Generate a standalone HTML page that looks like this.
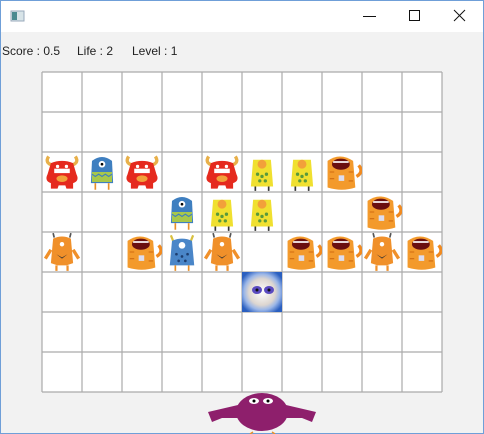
<!DOCTYPE html>
<html><head><meta charset="utf-8"><style>
html,body{margin:0;padding:0;}
body{width:484px;height:434px;position:relative;overflow:hidden;background:#f2f2f2;font-family:"Liberation Sans",sans-serif;}
.frame{position:absolute;left:0;top:0;width:482px;height:432px;border:1px solid #6f9fd8;}
.title{position:absolute;left:1px;top:1px;width:482px;height:31px;background:#fff;}
.hud{position:absolute;top:44px;font-size:12px;color:#222;}
svg{position:absolute;left:0;top:0;}
</style></head><body>
<div class="frame"></div>
<div class="title"></div>
<div class="hud" style="left:2px">Score : 0.5</div>
<div class="hud" style="left:77px">Life : 2</div>
<div class="hud" style="left:132px">Level : 1</div>
<svg width="484" height="434" viewBox="0 0 484 434">
<defs>
<symbol id="red" viewBox="3 2 34 36">
<path d="M8 6 Q4 12 12 14 M32 6 Q36 12 28 14" stroke="#e8b04a" stroke-width="3" fill="none"/>
<path d="M10 12 Q20 8 30 12 L33 22 Q36 28 30 30 L30 35 L24 35 L23 32 L17 32 L16 35 L10 35 L10 30 Q4 28 7 22 Z" fill="#e52a1e"/>
<rect x="13" y="17" width="14" height="4" fill="#fff"/><ellipse cx="20" cy="26" rx="5" ry="3" fill="#f2a13a"/>
<circle cx="16" cy="15" r="1.5" fill="#fff"/><circle cx="24" cy="15" r="1.5" fill="#fff"/>
</symbol>
<symbol id="blue" viewBox="3 2 34 36">
<path d="M11 10 Q20 3 29 10 L30 30 L10 30 Z" fill="#3f7fc0"/>
<rect x="11" y="20" width="18" height="9" fill="#a8c84a"/>
<path d="M11 22 l3 2 3-2 3 2 3-2 3 2 3-2" stroke="#3f7fc0" fill="none"/>
<circle cx="20" cy="13" r="3" fill="#fff"/><circle cx="20" cy="13" r="1.2" fill="#000"/>
<path d="M14 30 v6 M26 30 v6" stroke="#e8902a" stroke-width="1.5"/>
</symbol>
<symbol id="yellow" viewBox="3 2 34 36">
<path d="M12 9 L28 9 L30 33 L10 33 Z" fill="#f0e030"/>
<circle cx="20" cy="13" r="4" fill="#f2a13a"/>
<g fill="#5a9a3a"><circle cx="16" cy="22" r="1.5"/><circle cx="20" cy="24" r="1.5"/><circle cx="24" cy="22" r="1.5"/><circle cx="18" cy="28" r="1.5"/><circle cx="23" cy="28" r="1.5"/></g>
<path d="M14 33 v4 M26 33 v4" stroke="#333" stroke-width="1.5"/>
</symbol>
<symbol id="cat" viewBox="3 2 34 36">
<path d="M33 24 Q40 20 35 14" stroke="#f08a20" stroke-width="3" fill="none"/>
<path d="M7 10 Q18 2 30 10 L32 34 Q20 38 7 34 Z" fill="#f39a2c"/>
<ellipse cx="19" cy="13" rx="8" ry="5" fill="#6a1010"/><path d="M12 11 h14" stroke="#fff" stroke-width="1.5"/>
<rect x="17" y="23" width="5" height="5" fill="#dde"/>
<path d="M9 20 h4 M9 26 h4 M26 20 h4 M26 28 h4" stroke="#d06a10"/>
</symbol>
<symbol id="fuzz" viewBox="3 2 34 36">
<path d="M13 7 L12 3 M27 7 L28 3" stroke="#555" stroke-width="1.5"/>
<path d="M12 8 Q20 4 28 8 L30 30 L24 32 L16 32 L10 30 Z" fill="#f0902a"/>
<path d="M10 18 L5 26 M30 18 L35 26" stroke="#f0902a" stroke-width="3"/>
<circle cx="20" cy="13" r="2" fill="#fff"/><path d="M15 22 l5 3 5-3 -5 4z" fill="#333"/>
<path d="M15 32 v5 M25 32 v5" stroke="#f0902a" stroke-width="2"/>
</symbol>
<symbol id="blued" viewBox="3 2 34 36">
<path d="M12 10 L10 5 M28 10 L30 5" stroke="#d8c040" stroke-width="2"/>
<path d="M11 10 Q20 6 29 10 L31 32 L9 32 Z" fill="#4a86c8"/>
<circle cx="20" cy="14" r="3" fill="#fff"/>
<g fill="#1d3e70"><circle cx="15" cy="22" r="1.2"/><circle cx="20" cy="24" r="1.2"/><circle cx="25" cy="22" r="1.2"/><circle cx="17" cy="28" r="1.2"/><circle cx="23" cy="28" r="1.2"/></g>
<path d="M14 32 v5 M26 32 v5" stroke="#e8902a" stroke-width="1.5"/>
</symbol>
<radialGradient id="bg" cx="0.5" cy="0.5" r="0.6"><stop offset="0" stop-color="#fff"/><stop offset="0.55" stop-color="#ddd6d0"/><stop offset="0.75" stop-color="#9ab6e8"/><stop offset="1" stop-color="#2a5fc0"/></radialGradient>
</defs>
<g>
<rect x="42" y="72" width="400" height="320" fill="#fff"/>
<g stroke="#aaa" stroke-width="1.2">
<path d="M42 72V392M82 72V392M122 72V392M162 72V392M202 72V392M242 72V392M282 72V392M322 72V392M362 72V392M402 72V392M442 72V392"/>
<path d="M42 72H442M42 112H442M42 152H442M42 192H442M42 232H442M42 272H442M42 312H442M42 352H442M42 392H442"/>
</g>
</g>
<use href="#red" x="42" y="152" width="40" height="40"/>
<use href="#blue" x="82" y="152" width="40" height="40"/>
<use href="#red" x="122" y="152" width="40" height="40"/>
<use href="#red" x="202" y="152" width="40" height="40"/>
<use href="#yellow" x="242" y="152" width="40" height="40"/>
<use href="#yellow" x="282" y="152" width="40" height="40"/>
<use href="#cat" x="322" y="152" width="40" height="40"/>
<use href="#blue" x="162" y="192" width="40" height="40"/>
<use href="#yellow" x="202" y="192" width="40" height="40"/>
<use href="#yellow" x="242" y="192" width="40" height="40"/>
<use href="#cat" x="362" y="192" width="40" height="40"/>
<use href="#fuzz" x="42" y="232" width="40" height="40"/>
<use href="#cat" x="122" y="232" width="40" height="40"/>
<use href="#blued" x="162" y="232" width="40" height="40"/>
<use href="#fuzz" x="202" y="232" width="40" height="40"/>
<use href="#cat" x="282" y="232" width="40" height="40"/>
<use href="#cat" x="322" y="232" width="40" height="40"/>
<use href="#fuzz" x="362" y="232" width="40" height="40"/>
<use href="#cat" x="402" y="232" width="40" height="40"/>
<rect x="242" y="272" width="40" height="40" fill="url(#bg)"/>
<ellipse cx="257" cy="290" rx="5" ry="4" fill="#5a4ac0"/><ellipse cx="269" cy="290" rx="5" ry="4" fill="#5a4ac0"/>
<circle cx="257" cy="290" r="1.5" fill="#111"/><circle cx="269" cy="290" r="1.5" fill="#111"/>
<g fill="#8e1f6c">
<ellipse cx="262" cy="412" rx="26" ry="19"/>
<path d="M238 405 L208 412 L212 422 L222 418 L238 418Z M286 405 L316 412 L312 422 L302 418 L286 418Z"/>
</g>
<ellipse cx="254" cy="401" rx="5" ry="3" fill="#fff"/><ellipse cx="268" cy="401" rx="5" ry="3" fill="#fff"/>
<circle cx="254" cy="401" r="1.5" fill="#000"/><circle cx="268" cy="401" r="1.5" fill="#000"/>
<path d="M253 432 l-3 2 M272 432 l3 2" stroke="#e8902a" stroke-width="1.5"/>
<rect x="11" y="11" width="13" height="10" fill="#d8e4e8" stroke="#9ab" stroke-width="1"/><rect x="12" y="12" width="5" height="8" fill="#4a8a90"/>
<path d="M363 16.5H376" stroke="#111" stroke-width="1"/>
<rect x="409.5" y="10.5" width="10" height="10" fill="none" stroke="#111" stroke-width="1"/>
<path d="M454 10L465 21M465 10L454 21" stroke="#111" stroke-width="1"/>
</svg>
</body></html>
